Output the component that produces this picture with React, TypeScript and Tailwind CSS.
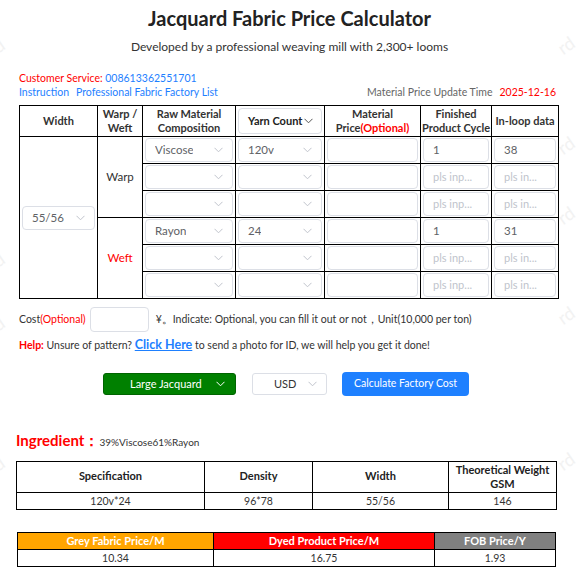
import React from "react"

// ── small bits ─────────────────────────────────────────────────────────────

function Chevron({ className = "stroke-[#c0c4cc]" }: { className?: string }) {
  return (
    <svg width="9" height="6" viewBox="0 0 9 6" fill="none" className={className}>
      <polyline points="0.5,0.8 4.5,4.8 8.5,0.8" strokeWidth="1" />
    </svg>
  )
}

function SelectBox({ value, className = "" }: { value?: string; className?: string }) {
  return (
    <div className={`flex items-center justify-between h-[24px] border border-[#dcdfe6] rounded-[4px] bg-white pl-[9px] pr-[9px] ${className}`}>
      <span className="text-[11.5px] text-[#606266] truncate">{value ?? ""}</span>
      <Chevron />
    </div>
  )
}

function InputBox({ value, placeholder }: { value?: string; placeholder?: string }) {
  return (
    <div className="flex items-center h-[24px] border border-[#dcdfe6] rounded-[4px] bg-white pl-[9px] overflow-hidden">
      {value ? (
        <span className="text-[11.5px] text-[#606266]">{value}</span>
      ) : (
        <span className="text-[11px] text-[#c0c4cc] whitespace-nowrap">{placeholder ?? ""}</span>
      )}
    </div>
  )
}

interface Row {
  material?: string
  yarn?: string
  cycle?: string
  loop?: string
}

const WARP: Row[] = [
  { material: "Viscose", yarn: "120v", cycle: "1", loop: "38" },
  {},
  {},
]
const WEFT: Row[] = [
  { material: "Rayon", yarn: "24", cycle: "1", loop: "31" },
  {},
  {},
]

const TD = "border border-black px-[2px] py-[1px] align-middle"
const TH = "border border-black px-[1px] text-[11px] font-bold text-[#333] leading-[14px] text-center whitespace-nowrap"

function BodyRows({ rows, label, first, labelRed }: { rows: Row[]; label: string; first: boolean; labelRed?: boolean }) {
  return (
    <>
      {rows.map((r, i) => (
        <tr key={i} className="h-[27px]">
          {first && i === 0 && (
            <td rowSpan={6} className={`${TD} px-[2px]`}>
              <SelectBox value="55/56" />
            </td>
          )}
          {i === 0 && (
            <td rowSpan={3} className={`border border-black text-center text-[11.5px] ${labelRed ? "text-[#ff0000]" : "text-[#333]"}`}>
              {label}
            </td>
          )}
          <td className={TD}><SelectBox value={r.material} /></td>
          <td className={TD}><SelectBox value={r.yarn} /></td>
          <td className={TD}><InputBox /></td>
          <td className={TD}><InputBox value={r.cycle} placeholder="pls inp..." /></td>
          <td className={TD}><InputBox value={r.loop} placeholder="pls in..." /></td>
        </tr>
      ))}
    </>
  )
}

// faint tiled watermark peeking out at the page edges
function Watermarks() {
  const spots = [
    { l: "-left-[12px]", t: "top-[34px]" },
    { l: "-left-[12px]", t: "top-[248px]" },
    { l: "-left-[12px]", t: "top-[312px]" },
    { l: "-left-[12px]", t: "top-[452px]" },
    { l: "left-[558px]", t: "top-[32px]" },
    { l: "left-[558px]", t: "top-[132px]" },
    { l: "left-[558px]", t: "top-[202px]" },
    { l: "left-[558px]", t: "top-[302px]" },
    { l: "left-[558px]", t: "top-[448px]" },
  ]
  return (
    <>
      {spots.map((s, i) => (
        <span
          key={i}
          className={`absolute ${s.l} ${s.t} text-[18px] text-[#f2f2f2] -rotate-[35deg] select-none pointer-events-none`}
        >
          rd
        </span>
      ))}
    </>
  )
}

export default function App() {
  return (
    <div className="relative w-[579px] h-[580px] bg-white overflow-hidden font-['Lato',sans-serif] text-[#333]">
      <Watermarks />

      <div className="relative pt-[6px]">
        {/* Header */}
        <h1 className="text-center text-[20px] font-bold text-[#222] leading-[24px]">
          Jacquard Fabric Price Calculator
        </h1>
        <p className="text-center text-[12px] text-[#333] mt-[9px] leading-[16px]">
          Developed by a professional weaving mill with 2,300+ looms
        </p>

        {/* Contact / update */}
        <div className="px-[19px] mt-[16px] text-[10.5px] leading-[14px]">
          <div>
            <span className="text-[#ff0000]">Customer Service: </span>
            <span className="text-[#1e80ff]">008613362551701</span>
          </div>
          <div className="flex justify-between pr-[4px]">
            <div className="text-[#1e80ff]">
              <span>Instruction</span>
              <span className="ml-[7px]">Professional Fabric Factory List</span>
            </div>
            <div>
              <span className="text-[#666]">Material Price Update Time</span>
              <span className="ml-[7px] text-[#ff0000]">2025-12-16</span>
            </div>
          </div>
        </div>

        {/* Main table */}
        <div className="px-[19px] mt-[6px]">
          <table className="w-[539px] table-fixed border-collapse">
            <colgroup>
              <col className="w-[78px]" />
              <col className="w-[45px]" />
              <col className="w-[93px]" />
              <col className="w-[89px]" />
              <col className="w-[96px]" />
              <col className="w-[71px]" />
              <col className="w-[67px]" />
            </colgroup>
            <thead>
              <tr className="h-[31px]">
                <th className={TH}>Width</th>
                <th className={TH}>Warp /<br />Weft</th>
                <th className={TH}>Raw Material<br />Composition</th>
                <th className="border border-black px-[2px] py-[1px]">
                  <div className="flex items-center justify-between h-[26px] border border-[#dcdfe6] rounded-[4px] pl-[9px] pr-[8px]">
                    <span className="text-[11px] font-bold text-[#222] whitespace-nowrap">Yarn Count</span>
                    <Chevron className="stroke-[#555]" />
                  </div>
                </th>
                <th className={TH}>
                  Material<br />Price<span className="text-[#ff0000]">(Optional)</span>
                </th>
                <th className={TH}>Finished<br />Product Cycle</th>
                <th className={TH}>In-loop data</th>
              </tr>
            </thead>
            <tbody>
              <BodyRows rows={WARP} label="Warp" first />
              <BodyRows rows={WEFT} label="Weft" first={false} labelRed />
            </tbody>
          </table>
        </div>

        {/* Cost */}
        <div className="flex items-center px-[19px] mt-[8px] text-[10.5px]">
          <span>Cost</span>
          <span className="text-[#ff0000]">(Optional)</span>
          <div className="ml-[4px] w-[59px] h-[25px] border border-[#dcdfe6] rounded-[4px]" />
          <span className="ml-[7px]">¥。Indicate: Optional, you can fill it out or not，Unit(10,000 per ton)</span>
        </div>

        {/* Help */}
        <div className="px-[19px] mt-[3px] text-[10.5px] leading-[20px]">
          <span className="text-[#ff0000] font-bold">Help:</span>
          <span> Unsure of pattern? </span>
          <span className="text-[#1e80ff] font-bold underline text-[12.5px]">Click Here</span>
          <span> to send a photo for ID, we will help you get it done!</span>
        </div>

        {/* Actions */}
        <div className="flex items-center mt-[17px] pl-[103px]">
          <div className="flex items-center justify-between w-[133px] h-[22px] bg-[#008000] border border-[#006400] rounded-[3px] pl-[26px] pr-[10px]">
            <span className="text-[11px] text-white">Large Jacquard</span>
            <Chevron className="stroke-white" />
          </div>
          <div className="ml-[16px] flex items-center justify-between w-[75px] h-[22px] border border-[#dcdfe6] rounded-[3px] pl-[21px] pr-[9px]">
            <span className="text-[11px] text-[#333]">USD</span>
            <Chevron />
          </div>
          <div className="ml-[15px] flex items-center justify-center w-[127px] h-[24px] bg-[#1e80ff] rounded-[4px]">
            <span className="text-[10.5px] text-white">Calculate Factory Cost</span>
          </div>
        </div>

        {/* Ingredient */}
        <div className="flex items-baseline px-[16px] mt-[33px]">
          <span className="text-[15px] font-bold text-[#ff0000]">Ingredient：</span>
          <span className="text-[10px] text-[#333]">39%Viscose61%Rayon</span>
        </div>

        {/* Spec table */}
        <div className="px-[16px] mt-[9px]">
          <table className="w-[540px] table-fixed border-collapse text-center">
            <colgroup>
              <col className="w-[188px]" />
              <col className="w-[108px]" />
              <col className="w-[136px]" />
              <col className="w-[108px]" />
            </colgroup>
            <tbody>
              <tr className="h-[31px]">
                <td className="border border-black text-[11px] font-bold text-[#222]">Specification</td>
                <td className="border border-black text-[11px] font-bold text-[#222]">Density</td>
                <td className="border border-black text-[11px] font-bold text-[#222]">Width</td>
                <td className="border border-black text-[11px] font-bold text-[#222] leading-[14px] whitespace-nowrap">Theoretical Weight<br />GSM</td>
              </tr>
              <tr className="h-[17px]">
                <td className="border border-black text-[10.5px] leading-[14px]">120v*24</td>
                <td className="border border-black text-[10.5px] leading-[14px]">96*78</td>
                <td className="border border-black text-[10.5px] leading-[14px]">55/56</td>
                <td className="border border-black text-[10.5px] leading-[14px]">146</td>
              </tr>
            </tbody>
          </table>
        </div>

        {/* Price table */}
        <div className="px-[17px] mt-[22px]">
          <table className="w-[538px] table-fixed border-collapse text-center">
            <colgroup>
              <col className="w-[196px]" />
              <col className="w-[221px]" />
              <col className="w-[121px]" />
            </colgroup>
            <tbody>
              <tr className="h-[17px]">
                <td className="border border-black bg-[#ffa500] text-white font-bold text-[11px] leading-[14px]">Grey Fabric Price/M</td>
                <td className="border border-black bg-[#ff0000] text-white font-bold text-[11px] leading-[14px]">Dyed Product Price/M</td>
                <td className="border border-black bg-[#808080] text-white font-bold text-[11px] leading-[14px]">FOB Price/Y</td>
              </tr>
              <tr className="h-[17px]">
                <td className="border border-black text-[10.5px] leading-[14px]">10.34</td>
                <td className="border border-black text-[10.5px] leading-[14px]">16.75</td>
                <td className="border border-black text-[10.5px] leading-[14px]">1.93</td>
              </tr>
            </tbody>
          </table>
        </div>
      </div>
    </div>
  )
}
